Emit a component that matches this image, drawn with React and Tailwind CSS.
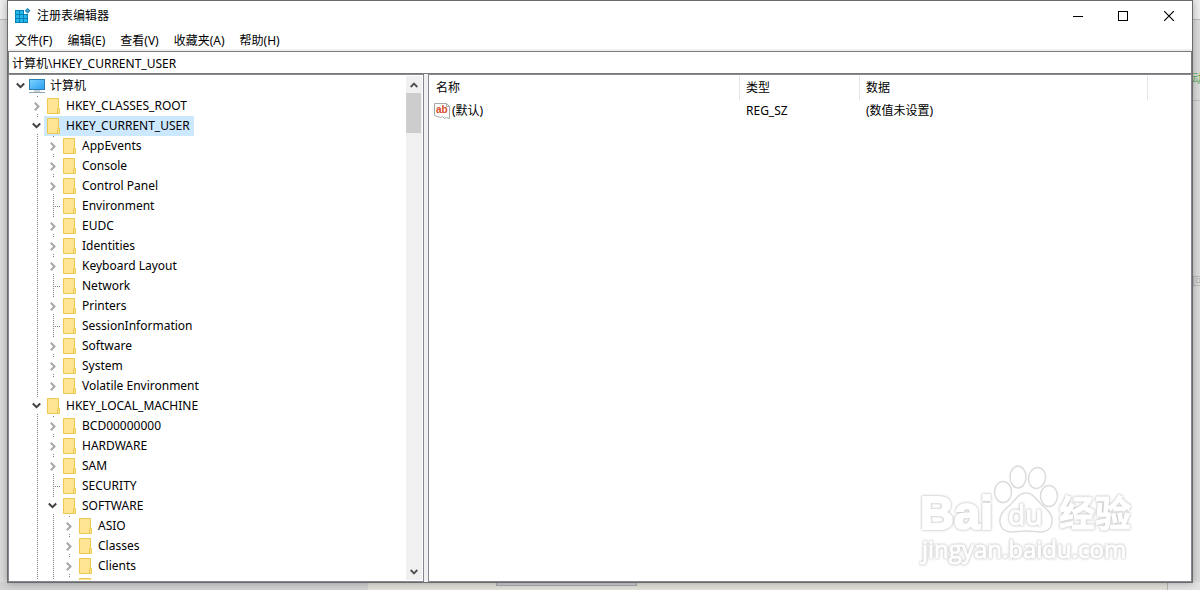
import React, { useState } from "react";

const menus = ["文件(F)", "编辑(E)", "查看(V)", "收藏夹(A)", "帮助(H)"];

// state: "open", "closed" or "leaf"
const treeRows = [
    { name: "计算机", depth: 0, state: "open" },
    { name: "HKEY_CLASSES_ROOT", depth: 1, state: "closed" },
    { name: "HKEY_CURRENT_USER", depth: 1, state: "open" },
    { name: "AppEvents", depth: 2, state: "closed" },
    { name: "Console", depth: 2, state: "closed" },
    { name: "Control Panel", depth: 2, state: "closed" },
    { name: "Environment", depth: 2, state: "leaf" },
    { name: "EUDC", depth: 2, state: "closed" },
    { name: "Identities", depth: 2, state: "closed" },
    { name: "Keyboard Layout", depth: 2, state: "closed" },
    { name: "Network", depth: 2, state: "leaf" },
    { name: "Printers", depth: 2, state: "closed" },
    { name: "SessionInformation", depth: 2, state: "leaf" },
    { name: "Software", depth: 2, state: "closed" },
    { name: "System", depth: 2, state: "closed" },
    { name: "Volatile Environment", depth: 2, state: "closed", last: true },
    { name: "HKEY_LOCAL_MACHINE", depth: 1, state: "open" },
    { name: "BCD00000000", depth: 2, state: "closed" },
    { name: "HARDWARE", depth: 2, state: "closed" },
    { name: "SAM", depth: 2, state: "closed" },
    { name: "SECURITY", depth: 2, state: "leaf" },
    { name: "SOFTWARE", depth: 2, state: "open" },
    { name: "ASIO", depth: 3, state: "closed" },
    { name: "Classes", depth: 3, state: "closed" },
    { name: "Clients", depth: 3, state: "closed" },
    { name: "", depth: 3, state: "closed" },
];

const values = [{ name: "(默认)", type: "REG_SZ", data: "(数值未设置)" }];

function RegeditIcon() {
    return (
        <svg className="h-4 w-4 shrink-0" viewBox="0 0 16 16" aria-hidden="true">
            <path d="M0 2h9v4h4v9H0z" fill="#0a7fb4" />
            {[3, 7, 11].map((y) =>
                [1, 5, 9].map((x) =>
                    x === 9 && y === 3 ? null : (
                        <rect key={`${x}-${y}`} x={x} y={y} width="3" height="3" fill="#22b8ee" />
                    )
                )
            )}
            <path d="M12.5 0 15.5 2.8 12.5 5.6 9.7 2.8z" fill="#1b7fb0" />
            <path d="M12.5 1.6 13.8 2.8 12.5 4 11.3 2.8z" fill="#4fb3dc" />
        </svg>
    );
}

function ComputerIcon() {
    return (
        <svg className="h-4 w-4 shrink-0" viewBox="0 0 16 16" aria-hidden="true">
            <defs>
                <linearGradient id="screen" x1="0" y1="0" x2="1" y2="1">
                    <stop offset="0" stopColor="#7ed4ff" />
                    <stop offset="1" stopColor="#2a9df4" />
                </linearGradient>
            </defs>
            <rect x="0.5" y="1.5" width="15" height="10" fill="url(#screen)" stroke="#2b7fb5" />
            <path d="M5 12h6v2H5z" fill="#c9d3da" />
            <path d="M0 14h16v1H0z" fill="#8fa3b0" />
        </svg>
    );
}

function FolderIcon() {
    return (
        <svg className="h-4 w-4 shrink-0" viewBox="0 0 16 16" aria-hidden="true">
            <path d="M2.5.5h11v10h1v5h-12z" fill="#ffe594" stroke="#edc84f" />
            <path d="M12.5 15v-4l1-1" fill="none" stroke="#e9c34f" />
        </svg>
    );
}

function StringIcon() {
    return (
        <svg className="h-4 w-4 shrink-0" viewBox="0 0 16 16" aria-hidden="true">
            <path d="M.5.5h12l3 3v12l-3-1-2 1-2-2-2 1-3-1-3-1z" fill="#fff" stroke="#a8a8a8" />
            <path d="M12.5.5v3h3" fill="none" stroke="#a8a8a8" />
            <text x="2" y="10" fontSize="10" fontWeight="700" fontFamily="Liberation Sans, sans-serif" fill="#d84a26">
                ab
            </text>
        </svg>
    );
}

// Dotted connector column, one per level in front of a row
function Guide({ branch = false }) {
    return (
        <svg className="h-5 w-4 shrink-0" viewBox="0 0 16 20" shapeRendering="crispEdges" aria-hidden="true">
            <path d="M9.5 0V20" stroke="#808080" strokeDasharray="1 1" />
            {branch && <path d="M11 10.5H16" stroke="#808080" strokeDasharray="1 1" />}
        </svg>
    );
}

function Toggle({ row }) {
    return (
        <svg className="h-5 w-4 shrink-0" viewBox="0 0 16 20" aria-hidden="true">
            {row.depth > 0 && (
                <g shapeRendering="crispEdges" fill="#808080">
                    <rect x="9" y="0" width="1" height="1" />
                    {!row.last && <rect x="9" y="18" width="1" height="1" />}
                </g>
            )}
            {row.state === "open" ? (
                <path d="M4.8 7.5 8.5 11.2 12.2 7.5" fill="none" stroke="#404040" strokeWidth="2" />
            ) : (
                <path d="M6.8 6.8 10.5 10.5 6.8 14.2" fill="none" stroke="#a6a6a6" strokeWidth="2" />
            )}
        </svg>
    );
}

function TreeRow({ row, selected, onSelect }) {
    return (
        <li role="treeitem" aria-selected={selected} className="flex h-5 pl-[3px]">
            {Array.from({ length: row.depth }, (_, level) =>
                level === 0 ? <span key={level} className="w-4 shrink-0" /> : <Guide key={level} />
            )}
            {row.state === "leaf" ? <Guide branch /> : <Toggle row={row} />}
            <button
                type="button"
                onClick={onSelect}
                className={`flex h-5 items-center gap-[5px] pr-1 pl-px whitespace-nowrap ${selected ? "bg-[#cce8ff]" : ""}`}
            >
                {row.depth === 0 ? <ComputerIcon /> : <FolderIcon />}
                <span>{row.name}</span>
            </button>
        </li>
    );
}

function TitleBar() {
    return (
        <header className="flex h-[30px] items-center justify-between">
            <div className="flex items-center gap-[6px] pl-[7px]">
                <RegeditIcon />
                <h1>注册表编辑器</h1>
            </div>
            <div className="flex h-7">
                <button type="button" aria-label="最小化" className="flex w-[45px] items-center justify-center">
                    <svg className="h-[10px] w-[10px]" viewBox="0 0 10 10" shapeRendering="crispEdges">
                        <path d="M0 5.5h10" stroke="#000" />
                    </svg>
                </button>
                <button type="button" aria-label="最大化" className="flex w-[45px] items-center justify-center">
                    <svg className="h-[10px] w-[10px]" viewBox="0 0 10 10" shapeRendering="crispEdges">
                        <path d="M.5.5h9v9h-9z" fill="none" stroke="#000" />
                    </svg>
                </button>
                <button type="button" aria-label="关闭" className="flex w-[47px] items-center justify-center">
                    <svg className="h-[10px] w-[10px]" viewBox="0 0 10 10">
                        <path d="M0 0 10 10M10 0 0 10" stroke="#000" strokeWidth="1.2" />
                    </svg>
                </button>
            </div>
        </header>
    );
}

function ScrollBar() {
    return (
        <div className="my-px mr-px flex w-4 shrink-0 flex-col bg-[#f0f0f0]">
            <button type="button" aria-label="向上滚动" className="flex h-[17px] items-center justify-center">
                <svg className="h-2 w-2" viewBox="0 0 8 8">
                    <path d="M.7 6 4 2.7 7.3 6" fill="none" stroke="#505050" strokeWidth="1.9" />
                </svg>
            </button>
            <div className="mr-px h-10 bg-[#cdcdcd]" />
            <button type="button" aria-label="向下滚动" className="mt-auto flex h-[17px] items-center justify-center">
                <svg className="h-2 w-2" viewBox="0 0 8 8">
                    <path d="M.7 2 4 5.3 7.3 2" fill="none" stroke="#505050" strokeWidth="1.9" />
                </svg>
            </button>
        </div>
    );
}

function ValueTable() {
    return (
        <table className="mt-px w-full table-fixed border-separate border-spacing-0 text-left">
            <colgroup>
                <col className="w-[311px]" />
                <col className="w-[120px]" />
                <col className="w-[288px]" />
                <col />
            </colgroup>
            <thead>
                <tr className="h-6">
                    <th className="border-r border-[#e5e5e5] p-0 pl-[7px] font-normal">名称</th>
                    <th className="border-r border-[#e5e5e5] p-0 pl-[6px] font-normal">类型</th>
                    <th className="border-r border-[#e5e5e5] p-0 pl-[6px] font-normal">数据</th>
                    <td />
                </tr>
            </thead>
            <tbody>
                {values.map((v) => (
                    <tr key={v.name} className="h-[21px]">
                        <td className="p-0 pl-[5px]">
                            <span className="flex items-center gap-[2px]">
                                <StringIcon />
                                {v.name}
                            </span>
                        </td>
                        <td className="p-0 pl-[6px]">{v.type}</td>
                        <td className="p-0 pl-[6px]">{v.data}</td>
                        <td />
                    </tr>
                ))}
            </tbody>
        </table>
    );
}

function Watermark() {
    return (
        <svg
            className="pointer-events-none absolute right-[51px] bottom-[13px] h-[112px] w-[224px]"
            viewBox="0 0 224 112"
            aria-hidden="true"
        >
            <g fill="#fff" stroke="#dcdcdc" strokeWidth="1.5">
                <ellipse cx="87" cy="36" rx="8.5" ry="10.5" />
                <ellipse cx="102" cy="21" rx="8" ry="11" />
                <ellipse cx="121" cy="22" rx="8.5" ry="10.5" transform="rotate(12 121 22)" />
                <ellipse cx="133" cy="40" rx="8.5" ry="10.5" />
                <path d="M110 37c-8 0-10 7-16 12-7 6-11 10-10 18 1 7 7 9 12 9s8-1 14-1 9 1 14 1 11-2 12-9c1-8-3-12-10-18-6-5-8-12-16-12z" />
            </g>
            <g
                fill="#fff"
                stroke="#fff"
                strokeWidth="1"
                className="[filter:drop-shadow(0_0_1px_#bdbdbd)_drop-shadow(0_0_1px_#e6e6e6)]"
            >
                <text x="4" y="73" fontSize="47" fontWeight="700" strokeWidth="2" fontFamily="Liberation Sans, sans-serif">
                    Bai
                </text>
                <text x="92" y="69" fontSize="28" fontFamily="Noto Sans, sans-serif">
                    du
                </text>
                <text x="143" y="71" fontSize="36" fontWeight="700" fontFamily="Noto Sans CJK SC, sans-serif">
                    经验
                </text>
                <text x="6" y="102" fontSize="24" fontFamily="Open Sans, sans-serif">
                    jingyan.baidu.com
                </text>
            </g>
        </svg>
    );
}

// Strips of the page that stay visible around the window
function Backdrop() {
    return (
        <div className="absolute inset-0 -z-10 flex flex-col overflow-hidden bg-[#dcdcdc]" aria-hidden="true">
            <div className="h-5 border-b border-[#bdbdbd] bg-[#eeeeee]" />
            <div className="flex flex-1 flex-col items-end">
                <p className="mt-[51px] -mr-1 text-[#5fae5f]">动</p>
                <div className="mt-[13px] h-px w-2 bg-[#bfbfbf]" />
                <p className="mt-[173px] -mr-1 text-[#b5b5b5]">回</p>
            </div>
            <div className="flex h-2">
                <div className="w-[368px] bg-[#d2d2d3]" />
                <div className="flex-1 border-r border-[#b8b8b8] bg-[#e2e2da] pl-32">
                    <div className="h-1 w-[141px] border border-t-0 border-[#acacb0] bg-[#cfced3]" />
                </div>
                <div className="w-8 bg-[#e4e4e4]" />
            </div>
        </div>
    );
}

export default function App() {
    const [selected, setSelected] = useState("HKEY_CURRENT_USER");

    return (
        <div className="relative isolate flex h-screen flex-col overflow-hidden px-[7px] pb-[7px] font-['Noto_Sans','Noto_Sans_CJK_SC',sans-serif] text-[12px] leading-4 text-black">
            <Backdrop />
            <div className="flex min-h-0 flex-1 flex-col border border-[#6b6b6e] bg-white shadow-[0_0_8px_rgba(0,0,0,0.3)]">
                <TitleBar />
                <nav className="flex h-5 items-center gap-[15px] border-b-2 border-[#f0f0f0] pt-[2px] pl-[7px]">
                    {menus.map((m) => (
                        <button key={m} type="button">
                            {m}
                        </button>
                    ))}
                </nav>
                <input
                    type="text"
                    aria-label="地址"
                    readOnly
                    value={`计算机\\${selected}`}
                    className="h-[23px] w-full shrink-0 border border-[#7a7a7a] px-[3px] outline-none"
                />
                <main className="flex min-h-0 flex-1 gap-1 bg-[#f0f0f0]">
                    <section className="flex w-[416px] shrink-0 border border-[#828790] bg-white">
                        <ul role="tree" className="my-px min-w-0 flex-1 overflow-hidden">
                            {treeRows.map((row, index) => (
                                <TreeRow
                                    key={index}
                                    row={row}
                                    selected={row.name === selected}
                                    onSelect={() => setSelected(row.name)}
                                />
                            ))}
                        </ul>
                        <ScrollBar />
                    </section>
                    <section className="relative min-w-0 flex-1 border border-[#828790] bg-white">
                        <ValueTable />
                        <Watermark />
                    </section>
                </main>
            </div>
        </div>
    );
}
